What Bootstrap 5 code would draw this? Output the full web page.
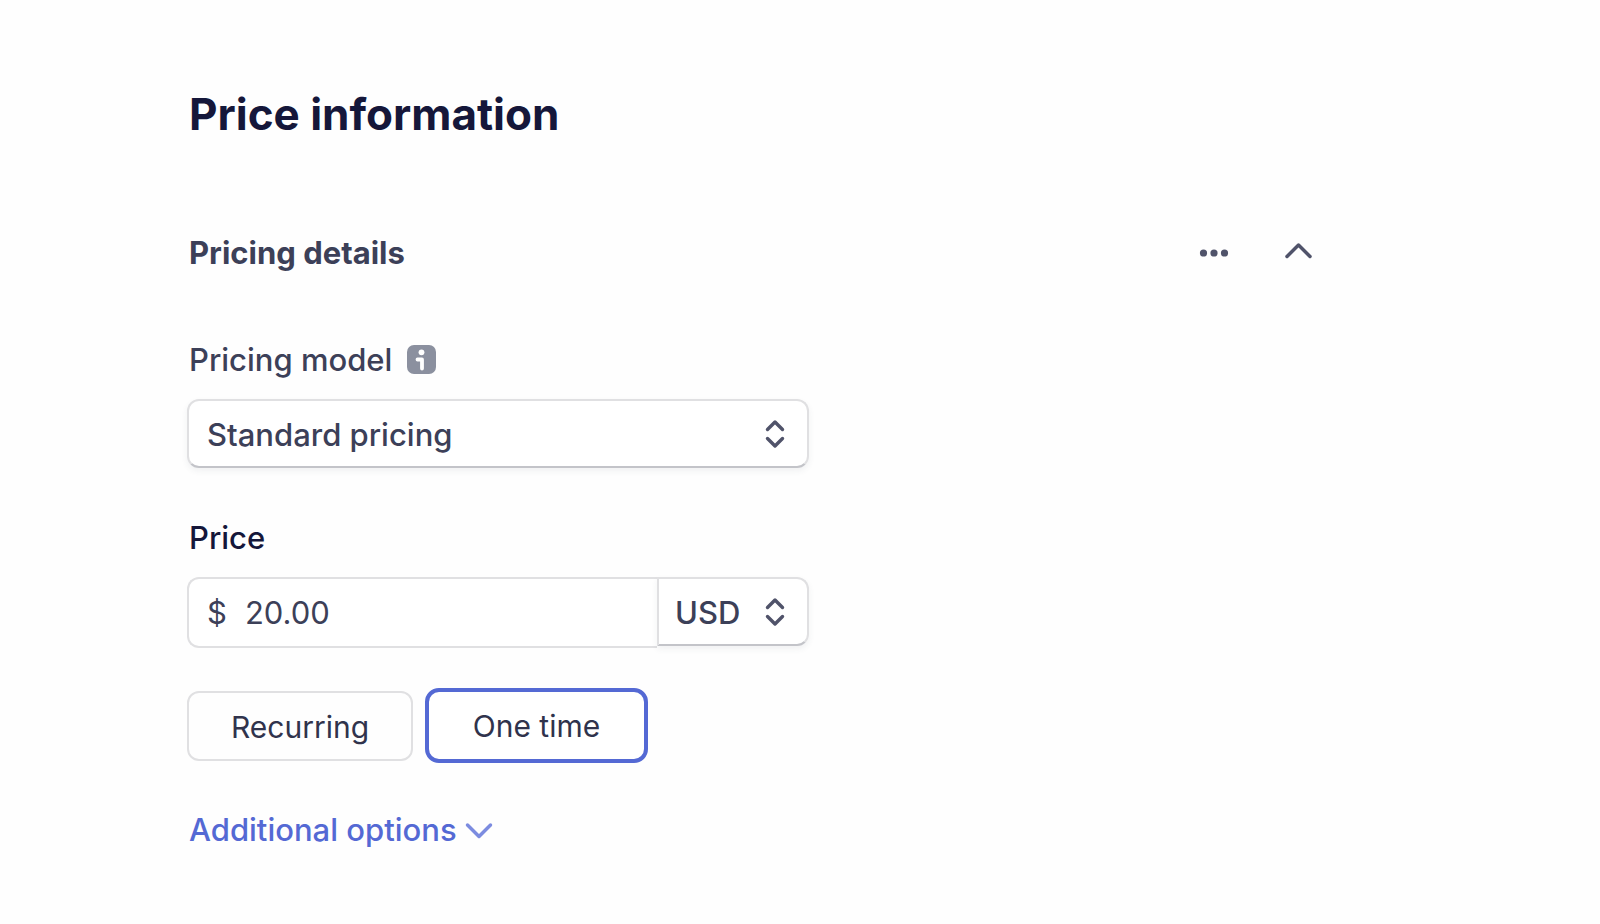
<!DOCTYPE html>
<html lang="en">
<head>
<meta charset="utf-8">
<meta name="viewport" content="width=device-width, initial-scale=1">
<title>Price information</title>
<link href="https://cdn.jsdelivr.net/npm/bootstrap@5.3.0/dist/css/bootstrap.min.css" rel="stylesheet">
<style>
  :root { --ink: #3c4058; --navy: #15173a; --accent: #5469d4; --line: #e0e0e2; }
  body { font-family: Inter, "Liberation Sans", sans-serif; font-size: 31px; line-height: 40px; color: var(--ink); background: #fefefe; }
  .price-page { padding: 86px 24px 60px; max-width: 1342px; }
  @media (min-width: 1200px) { .price-page { padding-left: 187px; } }
  .page-title, .section-title, .field-label, .more { padding-left: 2px; }
  .page-title { font-size: 44px; line-height: 56px; font-weight: 700; color: var(--navy); margin-bottom: 91px; }
  .section-head { margin-bottom: 67px; }
  .section-title { font-size: 31px; line-height: 40px; font-weight: 700; }
  .head-actions { gap: 46px; }
  .icon-btn { color: #50536a; line-height: 0; }
  .price-form { max-width: 622px; }
  .field-label { font-weight: 500; margin-bottom: 19px; }
  .price-label { color: var(--navy); }
  .info-btn { line-height: 0; margin: 0 0 20px 15px; }
  .model-field { margin-bottom: 50px; }
  .field-box, .field-box:focus { font-size: 31px; line-height: 40px; color: var(--ink); border: 2px solid var(--line); border-radius: 12px; background-color: #fff; box-shadow: none; }
  .pick {
    --bs-form-select-bg-img: url("data:image/svg+xml,%3Csvg xmlns='http://www.w3.org/2000/svg' viewBox='0 0 20 30' fill='none' stroke='%2350536a' stroke-width='3.4' stroke-linecap='round' stroke-linejoin='round'%3E%3Cpath d='M2.5 10.5 10 3l7.5 7.5M2.5 19.5 10 27l7.5-7.5'/%3E%3C/svg%3E");
    background-image: var(--bs-form-select-bg-img);
    background-size: 20px 30px; background-position: right 22px center;
    font-weight: 500; height: 69px; padding: 14px 56px 12px 18px;
  }
  .pick, .pick:focus { border-bottom-color: #c3c4c9; box-shadow: 0 3px 6px rgba(60, 64, 88, .07); }
  .amount-box { height: 71px; border-right: 0 !important; border-radius: 12px 0 0 12px !important; padding: 0 18px; gap: 18px; }
  .amount-box input { font-size: 31px; line-height: 40px; color: var(--ink); outline: 0; background: none; min-width: 0; }
  .currency { width: 152px; border-radius: 0 12px 12px 0 !important; padding-left: 16px; }
  .kinds { margin: 40px 0 47px; gap: 12px; }
  .kind { font-size: 30px; line-height: 40px; color: #30334c; border: 2px solid var(--line); border-radius: 12px; padding: 14px 0 12px; width: 226px; }
  .btn-check:checked + .kind { border: 4px solid var(--accent); color: #30334c; background: #fff; width: 223px; border-radius: 14px; padding: 14px 0 13px; }
  .more { color: var(--accent); font-weight: 500; gap: 8px; }
</style>
</head>
<body>
<main class="price-page">
  <h1 class="page-title">Price information</h1>
  <div class="section-head d-flex align-items-center justify-content-between">
    <h2 class="section-title mb-0">Pricing details</h2>
    <div class="head-actions d-flex align-items-center">
      <button type="button" class="btn icon-btn border-0 p-0" aria-label="More actions">
        <svg width="36" height="32" viewBox="0 0 36 32" fill="currentColor"><circle cx="7.500" cy="16" r="3.600"/><circle cx="18" cy="16" r="3.600"/><circle cx="28.500" cy="16" r="3.600"/></svg>
      </button>
      <button type="button" class="btn icon-btn border-0 p-0" aria-label="Collapse section">
        <svg width="40" height="32" viewBox="0 0 40 32" fill="none" stroke="currentColor" stroke-width="3.500" stroke-linecap="round" stroke-linejoin="round"><path d="M9 19.500 20.500 8 32 19.500"/></svg>
      </button>
    </div>
  </div>
  <form class="price-form">
    <div class="model-field">
      <div class="d-flex align-items-center">
        <label class="field-label" for="model">Pricing model</label>
        <button type="button" class="btn info-btn border-0 p-0" aria-label="About pricing models">
          <svg width="29" height="29" viewBox="0 0 29 29"><rect width="29" height="29" rx="7" fill="#8b909f"/><circle cx="14.500" cy="7.300" r="2.900" fill="#fff"/><path d="M10.500 14.500h4.500v9" fill="none" stroke="#fff" stroke-width="3.800" stroke-linecap="round" stroke-linejoin="round"/></svg>
        </button>
      </div>
      <select id="model" class="form-select field-box pick"><option>Standard pricing</option><option>Package pricing</option></select>
    </div>
    <label class="field-label price-label d-block" for="amount">Price</label>
    <div class="d-flex align-items-start">
      <div class="field-box amount-box d-flex align-items-center flex-grow-1">
        <span>$</span>
        <input id="amount" type="text" inputmode="decimal" class="border-0 p-0 w-100" value="20.00">
      </div>
      <select class="form-select field-box pick currency flex-shrink-0" aria-label="Currency"><option>USD</option><option>EUR</option></select>
    </div>
    <div class="kinds d-flex align-items-center" role="group" aria-label="Billing type">
      <input type="radio" class="btn-check" name="kind" id="recurring"><label class="btn kind" for="recurring">Recurring</label>
      <input type="radio" class="btn-check" name="kind" id="once" checked><label class="btn kind" for="once">One time</label>
    </div>
    <a href="#" class="more d-inline-flex align-items-center text-decoration-none">Additional options
      <svg width="28" height="20" viewBox="0 0 28 20" fill="none" stroke="#7c8ce0" stroke-width="3.500" stroke-linecap="round" stroke-linejoin="round"><path d="M2.500 5 14 16.500 25.500 5"/></svg>
    </a>
  </form>
</main>
<script src="https://cdn.jsdelivr.net/npm/bootstrap@5.3.0/dist/js/bootstrap.bundle.min.js"></script>
</body>
</html>
